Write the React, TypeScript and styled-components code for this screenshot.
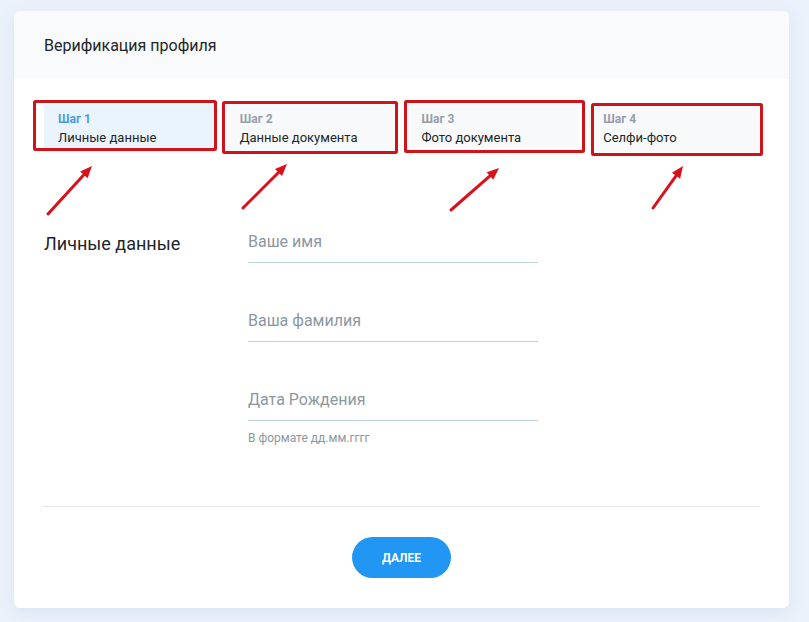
import React from "react";
import styled, { createGlobalStyle } from "styled-components";

const Global = createGlobalStyle`
  html, body { margin: 0; padding: 0; }
  body {
    background: #ecf2fb;
    font-family: Roboto, "Noto Sans", Arial, sans-serif;
    color: #212529;
  }
  * { box-sizing: border-box; }
`;

const Page = styled.div`
  position: relative;
  width: 809px;
  height: 622px;
  padding: 11px 20px 0 14px;
`;

const Card = styled.div`
  width: 775px;
  height: 597px;
  background: #ffffff;
  border-radius: 6px;
  box-shadow: 0 4px 14px rgba(160, 185, 220, 0.25);
  overflow: hidden;
  display: flex;
  flex-direction: column;
`;

const Header = styled.div`
  height: 68px;
  background: #f8fafc;
  display: flex;
  align-items: center;
  padding: 0 30px;
`;

const Title = styled.h1`
  margin: 0;
  font-size: 16px;
  font-weight: 400;
  color: #212529;
`;

const Body = styled.div`
  padding: 26px 30px 30px;
  display: flex;
  flex-direction: column;
  flex: 1;
`;

const Steps = styled.div`
  display: grid;
  grid-template-columns: repeat(4, 1fr);
  gap: 12px;
`;

const Step = styled.div<{ $active?: boolean }>`
  height: 47px;
  padding: 8px 14px;
  background: ${(p) => (p.$active ? "#eaf4fe" : "#f8f9fb")};
  display: flex;
  flex-direction: column;
  justify-content: center;
  gap: 4px;
`;

const StepNum = styled.div<{ $active?: boolean }>`
  font-size: 12px;
  font-weight: 700;
  line-height: 14px;
  color: ${(p) => (p.$active ? "#4b9be0" : "#959dab")};
`;

const StepName = styled.div`
  font-size: 13px;
  line-height: 16px;
  color: #212529;
`;

const Section = styled.div`
  display: flex;
  margin-top: 75px;
`;

const SectionTitle = styled.div`
  width: 204px;
  margin-top: 6px;
  font-size: 18px;
  line-height: 22px;
  color: #212529;
`;

const Fields = styled.div`
  width: 290px;
  display: flex;
  flex-direction: column;
  gap: 43px;
`;

const Field = styled.div`
  display: flex;
  flex-direction: column;
`;

const Input = styled.input`
  width: 100%;
  height: 36px;
  padding: 0 0 7px;
  border: none;
  border-bottom: 1px solid #bcd4df;
  background: transparent;
  font-family: Roboto, "Noto Sans", Arial, sans-serif;
  font-size: 16px;
  color: #212529;
  outline: none;
  &::placeholder { color: #8c97a2; }
`;

const Help = styled.div`
  margin-top: 10px;
  font-size: 12px;
  color: #8c97a2;
`;

const Divider = styled.hr`
  margin: 61px -1px 0;
  border: none;
  border-top: 1px solid #e2e5e9;
`;

const Footer = styled.div`
  display: flex;
  justify-content: center;
  margin-top: 30px;
`;

const Button = styled.button`
  width: 99px;
  height: 41px;
  border: none;
  border-radius: 21px;
  background: #2196f3;
  color: #ffffff;
  font-family: Roboto, "Noto Sans", Arial, sans-serif;
  font-size: 12px;
  font-weight: 700;
  cursor: pointer;
`;

const Overlay = styled.svg`
  position: absolute;
  left: 0;
  top: 0;
  pointer-events: none;
`;

const steps = [
  { n: "Шаг 1", name: "Личные данные", active: true },
  { n: "Шаг 2", name: "Данные документа" },
  { n: "Шаг 3", name: "Фото документа" },
  { n: "Шаг 4", name: "Селфи-фото" },
];

const boxes = [
  [33, 100, 217, 151],
  [222, 101, 398, 154],
  [404, 100, 585, 153],
  [591, 103, 763, 156],
];

const arrows = [
  [48, 214, 92, 166],
  [243, 208, 287, 164],
  [451, 210, 499, 168],
  [653, 208, 683, 166],
];

function Arrow({ x1, y1, x2, y2 }: { x1: number; y1: number; x2: number; y2: number }) {
  const dx = x2 - x1;
  const dy = y2 - y1;
  const len = Math.hypot(dx, dy);
  const ux = dx / len;
  const uy = dy / len;
  const hl = 12;
  const hw = 5;
  const bx = x2 - ux * hl;
  const by = y2 - uy * hl;
  const px = -uy;
  const py = ux;
  return (
    <g>
      <line x1={x1} y1={y1} x2={bx} y2={by} stroke="#d8111a" strokeWidth={3} strokeLinecap="round" />
      <polygon
        points={`${x2},${y2} ${bx + px * hw},${by + py * hw} ${bx - px * hw},${by - py * hw}`}
        fill="#d8111a"
      />
    </g>
  );
}

export default function App() {
  return (
    <>
      <Global />
      <Page>
        <Card>
          <Header>
            <Title>Верификация профиля</Title>
          </Header>
          <Body>
            <Steps>
              {steps.map((s) => (
                <Step key={s.n} $active={s.active}>
                  <StepNum $active={s.active}>{s.n}</StepNum>
                  <StepName>{s.name}</StepName>
                </Step>
              ))}
            </Steps>
            <Section>
              <SectionTitle>Личные данные</SectionTitle>
              <Fields>
                <Field>
                  <Input placeholder="Ваше имя" />
                </Field>
                <Field>
                  <Input placeholder="Ваша фамилия" />
                </Field>
                <Field>
                  <Input placeholder="Дата Рождения" />
                  <Help>В формате дд.мм.гггг</Help>
                </Field>
              </Fields>
            </Section>
            <Divider />
            <Footer>
              <Button>ДАЛЕЕ</Button>
            </Footer>
          </Body>
        </Card>
        <Overlay width={809} height={622} viewBox="0 0 809 622">
          {boxes.map(([x1, y1, x2, y2], i) => (
            <rect
              key={i}
              x={x1 + 1.5}
              y={y1 + 1.5}
              width={x2 - x1 - 3}
              height={y2 - y1 - 3}
              fill="none"
              stroke="#d0121b"
              strokeWidth={3}
              rx={1}
            />
          ))}
          {arrows.map(([x1, y1, x2, y2], i) => (
            <Arrow key={i} x1={x1} y1={y1} x2={x2} y2={y2} />
          ))}
        </Overlay>
      </Page>
    </>
  );
}
